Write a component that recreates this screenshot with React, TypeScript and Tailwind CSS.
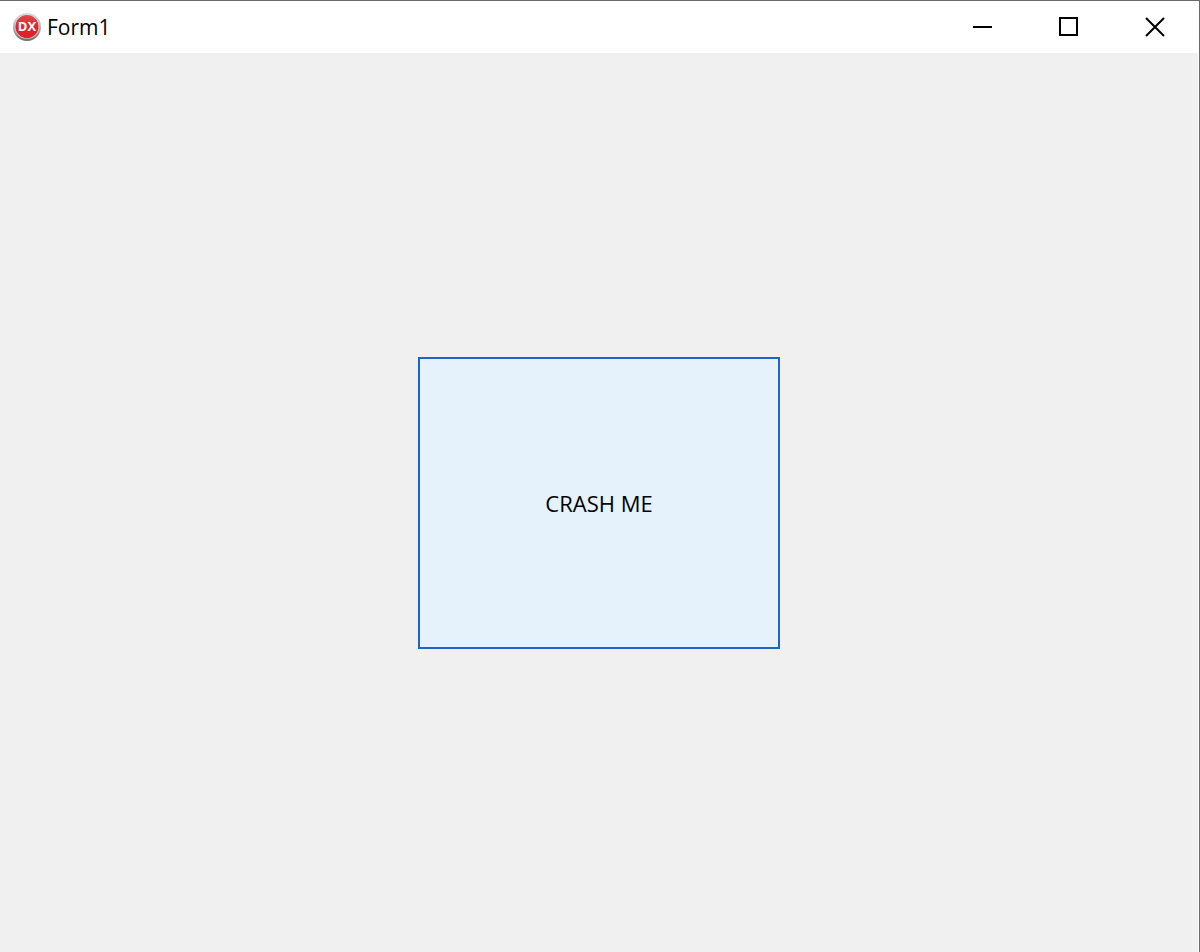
import type { ReactNode } from "react";

function AppIcon() {
  return (
    <svg className="h-7 w-7 shrink-0" viewBox="0 0 28 28" aria-hidden="true">
      <defs>
        <linearGradient id="rim" x1="0" y1="0" x2="0" y2="1">
          <stop offset="0" stopColor="#dcdcdc" />
          <stop offset="0.5" stopColor="#b4b4b4" />
          <stop offset="1" stopColor="#6e6e6e" />
        </linearGradient>
        <linearGradient id="face" x1="0" y1="0" x2="0" y2="1">
          <stop offset="0" stopColor="#e4474b" />
          <stop offset="0.55" stopColor="#d9252c" />
          <stop offset="1" stopColor="#e02029" />
        </linearGradient>
      </defs>
      <circle cx="14" cy="14" r="14" fill="url(#rim)" />
      <circle cx="14" cy="13.6" r="12.2" fill="#e6dede" />
      <circle cx="14" cy="13.6" r="11.6" fill="url(#face)" />
      <text
        x="14"
        y="18"
        textAnchor="middle"
        fontFamily="'Open Sans', sans-serif"
        fontSize="13"
        fontWeight="700"
        fill="#ffffff"
      >
        DX
      </text>
    </svg>
  );
}

function CaptionButton({ label, children }: { label: string; children: ReactNode }) {
  return (
    <button type="button" aria-label={label} className="flex h-full w-[86px] items-center justify-center">
      <svg
        className="h-5 w-5"
        viewBox="0 0 20 20"
        fill="none"
        stroke="#000000"
        strokeWidth="2"
        aria-hidden="true"
      >
        {children}
      </svg>
    </button>
  );
}

export default function App() {
  return (
    <div className="flex min-h-screen flex-col border-t border-r border-[#6b6b6b] bg-white pr-px font-['Open_Sans','Noto_Sans',sans-serif] text-black">
      <header className="flex h-[52px] items-center justify-between">
        <div className="flex items-center gap-1.5 pl-[13px]">
          <AppIcon />
          <h1 className="text-[21px] leading-7">Form1</h1>
        </div>
        <div className="flex h-full">
          <CaptionButton label="Minimize">
            <path d="M0 10H19" />
          </CaptionButton>
          <CaptionButton label="Maximize">
            <path d="M1 1H18V18H1Z" />
          </CaptionButton>
          <CaptionButton label="Close">
            <path d="M1 1L19 19M19 1L1 19" />
          </CaptionButton>
        </div>
      </header>

      <main className="flex flex-1 items-center justify-center bg-[#f0f0f0]">
        <button
          type="button"
          className="h-[292px] w-[362px] border-2 border-[#1b66c9] bg-[#e5f1fb] text-[22px] leading-7"
        >
          CRASH ME
        </button>
      </main>
    </div>
  );
}
